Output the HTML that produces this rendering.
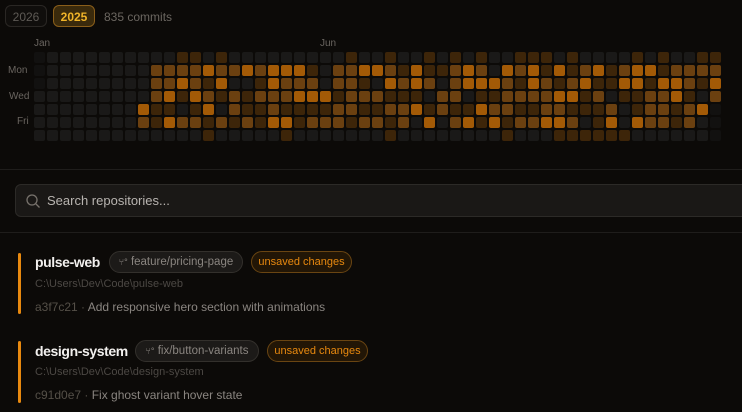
<!DOCTYPE html><html><head><style>
body{margin:0;width:742px;height:412px;background:#0c0a08;font-family:"Liberation Sans",sans-serif;position:relative;overflow:hidden}
.a{position:absolute;white-space:nowrap}
.btn{position:absolute;top:5px;height:22px;border-radius:6px;font-size:12px;line-height:22px;text-align:center;box-sizing:border-box}
.c{position:absolute;width:11px;height:11px;border-radius:2px}
.l0{background:#1a1918}.l1{background:#3d2509}.l2{background:#6b4010}.l3{background:#a35a06}.lE{background:#121110}
.lab{position:absolute;font-size:10px;color:#6a6560}
.bar{position:absolute;left:18px;width:3px;background:#e8890f;border-radius:2px}
.t{position:absolute;left:35px;font-size:14px;font-weight:bold;color:#f2f0ee;white-space:nowrap;letter-spacing:-0.4px}
.pill{position:absolute;height:22px;border-radius:11px;box-sizing:border-box;font-size:11.5px;line-height:20px;white-space:nowrap;text-align:center}
.br{background:#1c1a18;border:1px solid #33302c;color:#8a8580}
.un{background:#221606;border:1px solid #6a4512;color:#e8890f;font-size:11px}
.p{position:absolute;left:35px;font-size:11px;color:#4c4844;white-space:nowrap}
.m{position:absolute;left:35px;font-size:12px;color:#8a8580;white-space:nowrap}
.m span{color:#555048}
</style></head><body>
<div class="btn" style="left:5px;width:42px;border:1px solid #2a2724;color:#5e5a55;background:#100e0c">2026</div>
<div class="btn" style="left:53px;width:42px;border:1px solid #8a5e1a;color:#f0b429;background:#3a2a0c;font-weight:bold">2025</div>
<div class="a" style="left:104px;top:10px;font-size:12px;color:#6b6660">835 commits</div>
<div class="lab" style="left:34px;top:38px">Jan</div>
<div class="lab" style="left:320px;top:38px">Jun</div>
<div class="lab" style="left:8px;top:65px">Mon</div>
<div class="lab" style="left:9px;top:91px">Wed</div>
<div class="lab" style="left:17px;top:116px">Fri</div>
<div id="g"></div>
<div class="a" style="left:0;top:169px;width:742px;height:1px;background:#1f1d1b"></div>
<div class="a" style="left:15px;top:184px;width:740px;height:33px;box-sizing:border-box;border:1px solid #2c2a27;border-radius:6px;background:#1a1816"></div>
<svg class="a" style="left:25px;top:193px" width="16" height="16" viewBox="0 0 16 16"><circle cx="7" cy="7" r="5" fill="none" stroke="#77726c" stroke-width="1.3"/><path d="M11 11l3.5 3.5" stroke="#77726c" stroke-width="1.3"/></svg>
<div class="a" style="left:47px;top:193px;font-size:13px;color:#b8b4b0">Search repositories...</div>
<div class="a" style="left:0;top:232px;width:742px;height:1px;background:#1f1d1b"></div>

<div class="bar" style="top:253px;height:61px"></div>
<div class="t" style="top:254px">pulse-web</div>
<div class="pill br" style="left:109px;top:251px;width:134px"><span style="font-size:9px">⑂°</span> feature/pricing-page</div>
<div class="pill un" style="left:251px;top:251px;width:101px">unsaved changes</div>
<div class="p" style="top:278px">C:\Users\Dev\Code\pulse-web</div>
<div class="m" style="top:300px"><span>a3f7c21 ·</span> Add responsive hero section with animations</div>

<div class="bar" style="top:341px;height:62px"></div>
<div class="t" style="top:343px">design-system</div>
<div class="pill br" style="left:135px;top:340px;width:124px"><span style="font-size:9px">⑂°</span> fix/button-variants</div>
<div class="pill un" style="left:267px;top:340px;width:101px">unsaved changes</div>
<div class="p" style="top:366px">C:\Users\Dev\Code\design-system</div>
<div class="m" style="top:388px"><span>c91d0e7 ·</span> Fix ghost variant hover state</div>
<script>
var G=[
[ 'E','0','0','0','0','0','0','0','0','0','0','1','1','0','1','0','0','0','0','0','0','0','0','0','1','0', '0','1','0','0','1','0','1','0','1','0','0','1','1','1','0','1','0','0','0','0','1','0','1','0','0','1','1'],
[ 'E','0','0','0','0','0','0','0','0','2','2','2','2','3','2','2','3','2','3','3','3','1','0','2','2','3', '3','2','1','3','1','1','2','3','2','0','3','2','3','1','3','1','2','3','1','2','3','3','1','2','2','2','2'],
[ 'E','0','0','0','0','0','0','0','0','2','2','3','2','1','3','0','0','1','3','2','2','2','0','2','2','1', '0','3','2','3','2','0','2','3','3','3','2','1','3','2','1','2','3','1','1','3','3','1','3','3','2','1','3'],
[ '0','0','0','0','0','0','0','0','0','2','3','1','3','2','1','2','1','2','2','2','3','3','3','1','2','2', '2','1','1','1','0','2','2','0','1','1','2','2','2','2','3','3','1','2','0','1','1','2','2','3','1','0','2'],
[ '0','0','0','0','0','0','0','0','3','1','1','0','1','3','0','2','1','1','2','1','1','1','1','2','2','1', '1','2','2','3','1','2','1','1','3','2','2','1','1','2','2','1','1','1','2','0','1','2','2','1','2','3','E'],
[ '0','0','0','0','0','0','0','0','2','1','3','2','2','1','2','1','2','1','3','3','1','2','2','2','1','2', '2','1','2','0','3','0','2','3','1','3','1','2','2','3','3','2','0','1','3','0','3','2','2','1','2','0','E'],
[ '0','0','0','0','0','0','0','0','0','0','0','0','0','1','0','0','0','0','0','1','0','0','0','0','0','0', '0','1','0','0','0','0','0','0','0','0','1','0','0','0','1','1','1','1','1','1','0','0','0','0','0','0','E']];
var h='';
for(var r=0;r<7;r++)for(var c=0;c<53;c++)h+='<div class="c l'+G[r][c]+'" style="left:'+(34+13*c)+'px;top:'+(52+13*r)+'px"></div>';
document.getElementById('g').innerHTML=h;
</script>
</body></html>
